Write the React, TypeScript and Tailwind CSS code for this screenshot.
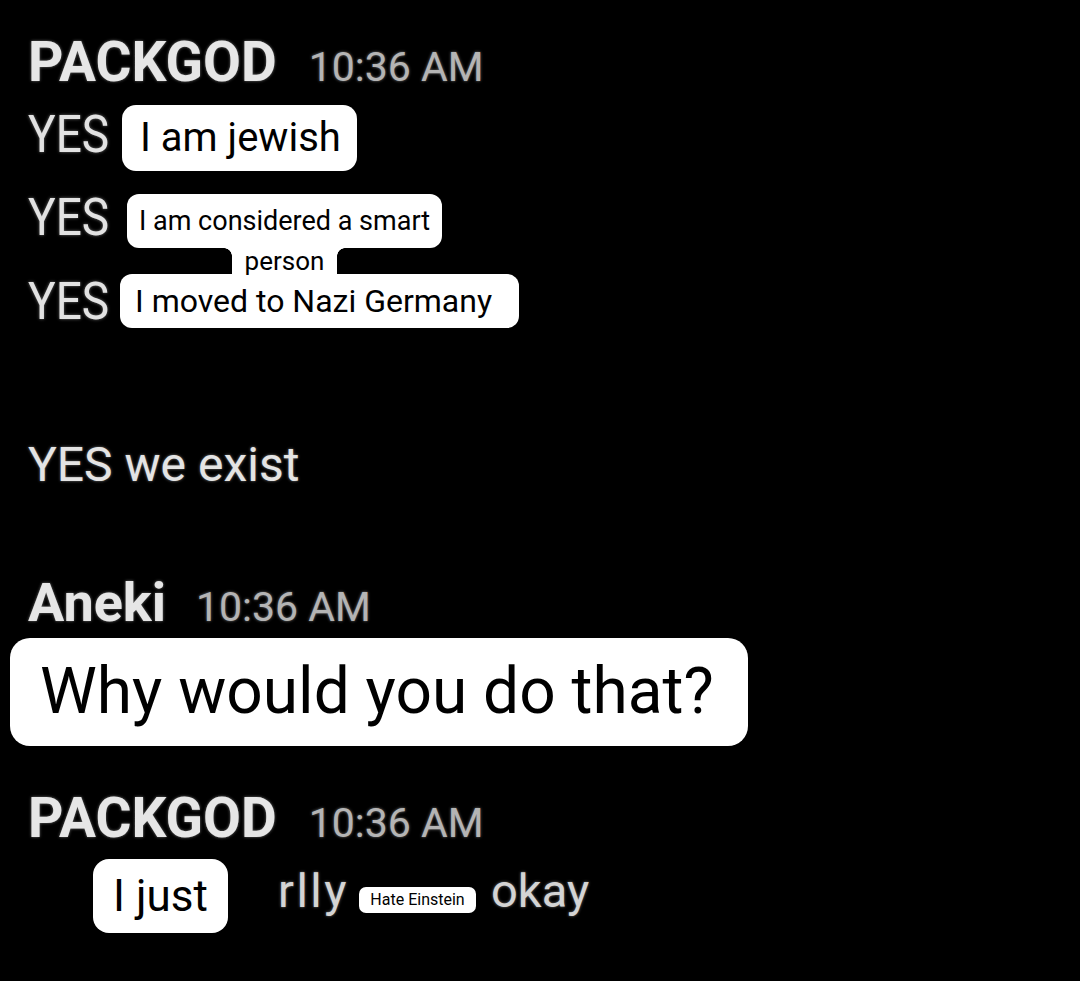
import React from "react";

const glow = "[text-shadow:0_0_3px_rgba(255,255,255,0.45)]";

function Yes() {
  return (
    <span className={`inline-block w-[90px] shrink-0 text-[46px] leading-none text-[#e2e2e2] scale-y-[1.12] origin-center ${glow}`}>
      YES
    </span>
  );
}

function Header({ name, size, gap }: { name: string; size: string; gap: string }) {
  return (
    <div className="flex items-baseline">
      <span className={`${size} leading-none font-bold text-[#e6e6e6] ${glow}`}>{name}</span>
      <span className={`${gap} text-[41px] leading-none text-[#b4b4b4] ${glow}`}>10:36 AM</span>
    </div>
  );
}

export default function App() {
  return (
    <div className="w-[1080px] h-[981px] bg-black overflow-hidden font-['Roboto',Arial,sans-serif]">
      <div className="flex flex-col pl-[28px]">
        <div className="mt-[35px]">
          <Header name="PACKGOD" size="text-[55px]" gap="ml-[32px]" />
        </div>

        <div className="mt-[15px] flex items-start">
          <div className="mt-[6px]"><Yes /></div>
          <div className="ml-[4px] w-[235px] h-[66px] pl-[18px] flex items-center bg-white rounded-[14px] text-[40px] leading-none text-black whitespace-nowrap">
            I am jewish
          </div>
        </div>

        <div className="mt-[23px] flex items-start">
          <Yes />
          <div className="ml-[9px] flex flex-col items-start text-black">
            <div className="w-[315px] h-[54px] pl-[12px] flex items-center bg-white rounded-[12px] text-[27px] leading-none whitespace-nowrap">
              I am considered a smart
            </div>
            <div className="relative ml-[105px] w-[105px] h-[26px] flex items-center justify-center bg-white text-[26px] leading-none">
              person
              <span className="absolute -left-[8px] top-0 w-[8px] h-[8px] bg-[radial-gradient(circle_at_0%_100%,transparent_7.5px,#fff_8px)]" />
              <span className="absolute -right-[8px] top-0 w-[8px] h-[8px] bg-[radial-gradient(circle_at_100%_100%,transparent_7.5px,#fff_8px)]" />
            </div>
          </div>
        </div>

        <div className="flex items-center h-[54px]">
          <Yes />
          <div className="ml-[2px] w-[399px] h-[54px] pl-[15px] flex items-center bg-white rounded-[12px] text-[32px] leading-none text-black whitespace-nowrap">
            I moved to Nazi Germany
          </div>
        </div>

        <div className={`mt-[113px] text-[48px] leading-none text-[#e4e4e4] ${glow}`}>
          YES we exist
        </div>

        <div className="mt-[87px]">
          <Header name="Aneki" size="text-[54px]" gap="ml-[30px]" />
        </div>

        <div className="mt-[8px] -ml-[18px] w-[738px] h-[108px] pl-[30px] flex items-center bg-white rounded-[20px] text-[64px] leading-none text-black whitespace-nowrap">
          Why would you do that?
        </div>

        <div className="mt-[45px]">
          <Header name="PACKGOD" size="text-[55px]" gap="ml-[32px]" />
        </div>

        <div className="mt-[13px] flex items-start h-[74px]">
          <div className="ml-[65px] w-[135px] h-[74px] flex items-center justify-center bg-white rounded-[16px] text-[44px] leading-none text-black">
            I just
          </div>
          <span className={`ml-[50px] mt-[8px] text-[47px] leading-none text-[#d4d4d4] tracking-[2.5px] ${glow}`}>rlly</span>
          <div className="ml-[10px] mt-[28px] w-[117px] h-[26px] flex items-center justify-center bg-white rounded-[7px] text-[16px] leading-none text-black">
            Hate Einstein
          </div>
          <span className={`ml-[15px] mt-[8px] text-[47px] leading-none text-[#d4d4d4] ${glow}`}>okay</span>
        </div>
      </div>
    </div>
  );
}
